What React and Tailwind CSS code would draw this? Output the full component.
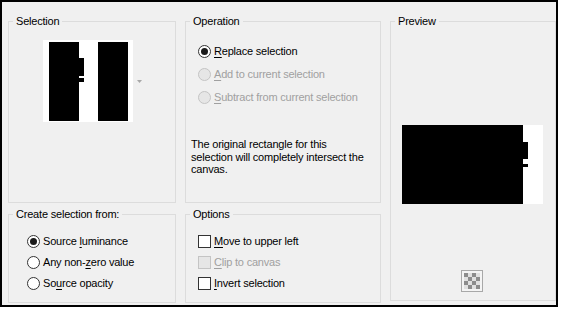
import React from "react";

const font = { fontFamily: '"Liberation Sans", Arial, sans-serif' };

const Under = ({ children }) => <span className="underline underline-offset-[2px]">{children}</span>;

const Radio = ({ checked, disabled }) => (
   <span
      className={`w-[13px] h-[13px] rounded-full border flex items-center justify-center shrink-0 ${
         disabled ? "border-[#c4c4c4] bg-[#e6e6e6]" : "border-[#333333] bg-white"
      }`}
   >
      {checked && <span className="w-[7px] h-[7px] rounded-full bg-[#1a1a1a]" />}
   </span>
);

const Check = ({ disabled }) => (
   <span
      className={`w-[13px] h-[13px] border shrink-0 ${
         disabled ? "border-[#c4c4c4] bg-[#e6e6e6]" : "border-[#333333] bg-white"
      }`}
   />
);

const Group = ({ title, className = "", children }) => (
   <fieldset className={`border border-[#dcdcdc] ${className}`}>
      <legend className="ml-[4px] px-[3px] leading-[14px] h-[14px]">{title}</legend>
      {children}
   </fieldset>
);

const Row = ({ control, disabled, children, className = "" }) => (
   <div className={`h-[21px] flex items-center gap-[3px] ${disabled ? "text-[#a0a0a0]" : ""} ${className}`}>
      {control}
      <span>{children}</span>
   </div>
);

const SelectionThumb = () => (
   <svg width="90" height="82" viewBox="0 0 90 82">
      <rect width="90" height="82" fill="#fff" />
      <rect x="6" y="2" width="30" height="79" fill="#000" />
      <rect x="36" y="18" width="5" height="18" fill="#000" />
      <rect x="34" y="38" width="7" height="4" fill="#000" />
      <rect x="55" y="2" width="30" height="79" fill="#000" />
   </svg>
);

const PreviewThumb = () => (
   <svg width="141" height="79" viewBox="0 0 141 79">
      <rect width="141" height="79" fill="#fff" />
      <rect x="0" y="0" width="121" height="79" fill="#000" />
      <rect x="121" y="17" width="5" height="17" fill="#000" />
      <rect x="116" y="39" width="10" height="3" fill="#000" />
   </svg>
);

const Checker = () => (
   <svg width="22" height="22" viewBox="0 0 22 22">
      <rect x="0.5" y="0.5" width="21" height="21" fill="#f4f4f4" stroke="#a8a8a8" />
      {[0, 1, 2, 3].map((r) =>
         [0, 1, 2, 3].map((c) => (
            <rect
               key={`${r}-${c}`}
               x={3 + c * 4}
               y={3 + r * 4}
               width="4"
               height="4"
               fill={(r + c) % 2 === 0 ? "#8c8c8c" : "#e0e0e0"}
            />
         ))
      )}
   </svg>
);

export default function App() {
   return (
      <div className="w-[561px] h-[310px] bg-white text-[11px] tracking-[-0.2px] text-black" style={font}>
         <div className="w-[558px] h-[307px] border-2 border-black bg-[#f0f0f0] pl-[6px] pt-[12px]">
            <div className="grid grid-cols-[168px_196px_166px] grid-rows-[189px_96px] gap-x-[9px] gap-y-[4px]">
               <Group title="Selection">
                  <div className="flex items-start pl-[34px] pt-[12px]">
                     <SelectionThumb />
                     <svg width="5" height="3" viewBox="0 0 5 3" className="ml-[4px] mt-[40px]">
                        <path d="M0 0 H5 L2.5 3 Z" fill="#a8a8a8" />
                     </svg>
                  </div>
               </Group>

               <Group title="Operation">
                  <div className="pl-[12px] pt-[13px] flex flex-col gap-[2px]">
                     <Row control={<Radio checked />}>
                        <Under>R</Under>eplace selection
                     </Row>
                     <Row control={<Radio disabled />} disabled>
                        <Under>A</Under>dd to current selection
                     </Row>
                     <Row control={<Radio disabled />} disabled>
                        <Under>S</Under>ubtract from current selection
                     </Row>
                  </div>
                  <p className="pl-[5px] pt-[30px] leading-[12.5px]">
                     The original rectangle for this
                     <br />
                     selection will completely intersect the
                     <br />
                     canvas.
                  </p>
               </Group>

               <Group title="Preview" className="row-span-2 mb-[2px] flex flex-col">
                  <div className="flex pt-[97px] pl-[11px]">
                     <PreviewThumb />
                  </div>
                  <div className="flex justify-center mt-[66px] pr-[2px]">
                     <Checker />
                  </div>
               </Group>

               <Group title="Create selection from:">
                  <div className="pl-[18px] pt-[10px] flex flex-col">
                     <Row control={<Radio checked />}>
                        Source <Under>l</Under>uminance
                     </Row>
                     <Row control={<Radio />}>
                        Any non-<Under>z</Under>ero value
                     </Row>
                     <Row control={<Radio />}>
                        So<Under>u</Under>rce opacity
                     </Row>
                  </div>
               </Group>

               <Group title="Options">
                  <div className="pl-[12px] pt-[10px] flex flex-col">
                     <Row control={<Check />}>
                        <Under>M</Under>ove to upper left
                     </Row>
                     <Row control={<Check disabled />} disabled>
                        <Under>C</Under>lip to canvas
                     </Row>
                     <Row control={<Check />}>
                        <Under>I</Under>nvert selection
                     </Row>
                  </div>
               </Group>
            </div>
         </div>
      </div>
   );
}
